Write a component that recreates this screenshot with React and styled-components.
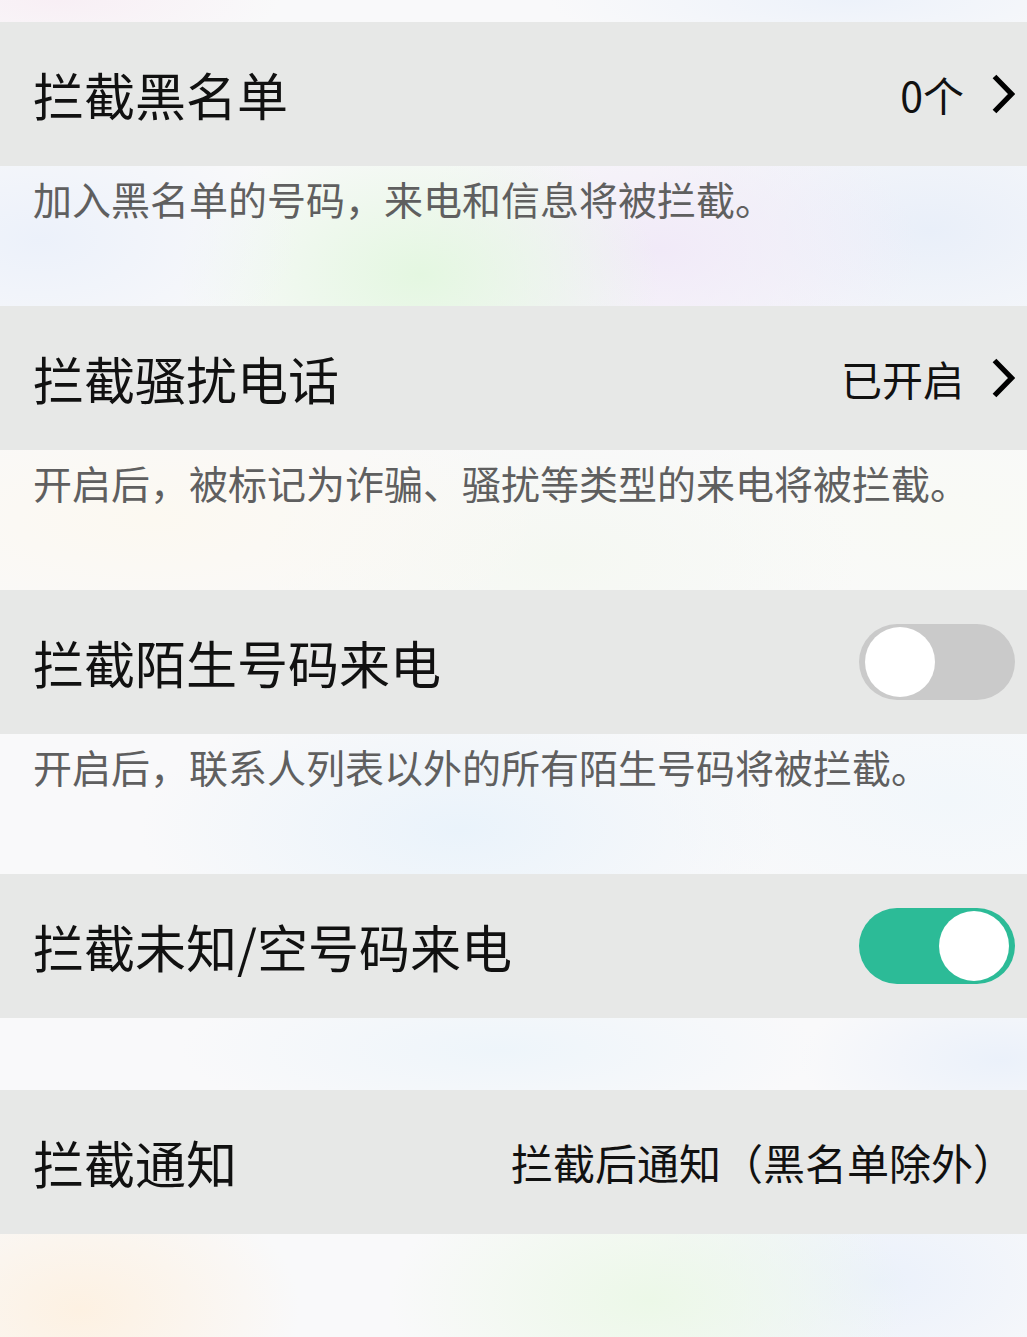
import React from "react";
import styled, { createGlobalStyle } from "styled-components";

const GlobalStyle = createGlobalStyle`
  html, body { margin: 0; padding: 0; }
  body {
    font-family: "Noto Sans CJK SC", "Noto Sans", sans-serif;
    -webkit-font-smoothing: antialiased;
    text-spacing-trim: space-all;
  }
  * { box-sizing: border-box; }
`;

const Page = styled.div`
  width: 1027px;
  min-height: 1337px;
  padding-top: 22px;
  display: flex;
  flex-direction: column;
  background-color: #f9f9fa;
  background-image:
    radial-gradient(ellipse 220px 60px at 60px 0px, #f8eff5 0%, rgba(248,239,245,0) 100%),
    radial-gradient(ellipse 300px 60px at 850px 0px, #edf2fa 0%, rgba(237,242,250,0) 100%),
    radial-gradient(ellipse 260px 140px at 40px 240px, #ecf1fa 0%, rgba(236,241,250,0) 100%),
    radial-gradient(ellipse 240px 150px at 420px 275px, #e4f7e1 0%, rgba(228,247,225,0) 100%),
    radial-gradient(ellipse 260px 150px at 660px 250px, #f1eaf8 0%, rgba(241,234,248,0) 100%),
    radial-gradient(ellipse 300px 150px at 930px 230px, #e9eff9 0%, rgba(233,239,249,0) 100%),
    radial-gradient(ellipse 400px 140px at 150px 520px, #fcf9f1 0%, rgba(252,249,241,0) 100%),
    radial-gradient(ellipse 300px 140px at 560px 560px, #f5f8f2 0%, rgba(245,248,242,0) 100%),
    radial-gradient(ellipse 300px 140px at 950px 520px, #f9faf5 0%, rgba(249,250,245,0) 100%),
    radial-gradient(ellipse 320px 140px at 460px 830px, #eaf3fb 0%, rgba(234,243,251,0) 100%),
    radial-gradient(ellipse 300px 140px at 950px 800px, #f2f7fb 0%, rgba(242,247,251,0) 100%),
    radial-gradient(ellipse 320px 80px at 500px 1050px, #eef5fa 0%, rgba(238,245,250,0) 100%),
    radial-gradient(ellipse 200px 80px at 1000px 1060px, #ebf1fa 0%, rgba(235,241,250,0) 100%),
    radial-gradient(ellipse 220px 140px at 80px 1310px, #fdf1e2 0%, rgba(253,241,226,0) 100%),
    radial-gradient(ellipse 260px 140px at 650px 1300px, #ecf8e8 0%, rgba(236,248,232,0) 100%),
    radial-gradient(ellipse 260px 140px at 880px 1280px, #ebf1fb 0%, rgba(235,241,251,0) 100%);
`;

const Row = styled.div`
  height: 144px;
  flex: none;
  display: flex;
  align-items: center;
  justify-content: space-between;
  padding: 0 12px 0 33px;
  background: #e7e8e7;
`;

const Title = styled.span`
  font-size: 51px;
  line-height: 1;
  color: #111;
  white-space: nowrap;
`;

const Value = styled.span`
  display: flex;
  align-items: center;
  font-size: ${(p) => p.$size || 41}px;
  line-height: 1;
  color: #111;
  white-space: nowrap;
`;

const ChevronIcon = styled.svg`
  width: 24px;
  height: 40px;
  margin-left: 27px;
  flex: none;
`;

const Desc = styled.div`
  height: ${(p) => p.$h || 140}px;
  flex: none;
  padding: 9px 33px 0 33px;
  font-size: 39px;
  line-height: 46px;
  color: #5f5f5f;
  white-space: nowrap;
`;

const Track = styled.div`
  width: 156px;
  height: 76px;
  border-radius: 38px;
  display: flex;
  align-items: center;
  justify-content: ${(p) => (p.$on ? "flex-end" : "flex-start")};
  padding: 0 6px;
  background: ${(p) => (p.$on ? "#2cbb97" : "#cacaca")};
`;

const Knob = styled.div`
  width: 70px;
  height: 70px;
  border-radius: 50%;
  background: #fff;
`;

function Chevron() {
  return (
    <ChevronIcon viewBox="0 0 24 40">
      <path d="M3.5 2.5 L20.5 20 L3.5 37.5" fill="none" stroke="#000" strokeWidth="5.2" strokeLinecap="butt" strokeLinejoin="miter" />
    </ChevronIcon>
  );
}

function Toggle({ on }) {
  return (
    <Track $on={on}>
      <Knob />
    </Track>
  );
}

export default function App() {
  return (
    <>
      <GlobalStyle />
      <Page>
        <Row>
          <Title>拦截黑名单</Title>
          <Value>
            0个
            <Chevron />
          </Value>
        </Row>
        <Desc>加入黑名单的号码，来电和信息将被拦截。</Desc>
        <Row>
          <Title>拦截骚扰电话</Title>
          <Value>
            已开启
            <Chevron />
          </Value>
        </Row>
        <Desc>开启后，被标记为诈骗、骚扰等类型的来电将被拦截。</Desc>
        <Row>
          <Title>拦截陌生号码来电</Title>
          <Toggle on={false} />
        </Row>
        <Desc>开启后，联系人列表以外的所有陌生号码将被拦截。</Desc>
        <Row>
          <Title>拦截未知/空号码来电</Title>
          <Toggle on={true} />
        </Row>
        <Desc $h={72} />
        <Row>
          <Title>拦截通知</Title>
          <Value $size={42}>拦截后通知（黑名单除外）</Value>
        </Row>
      </Page>
    </>
  );
}
